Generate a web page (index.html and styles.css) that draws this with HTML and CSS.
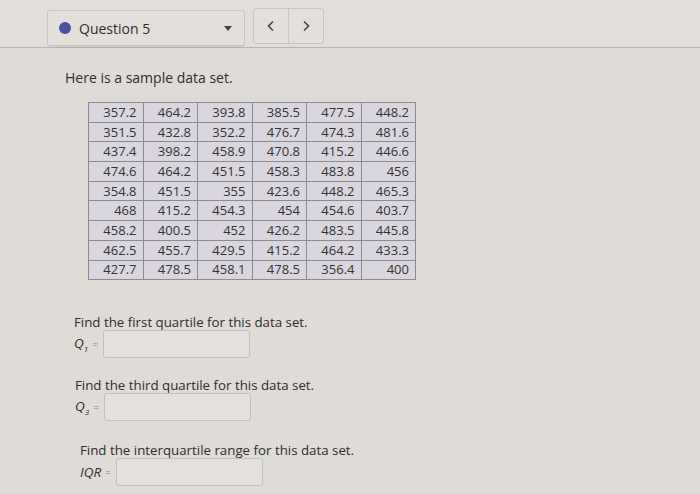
FILE: index.html
```html
<!DOCTYPE html>
<html>
<head>
<meta charset="utf-8">
<link rel="stylesheet" href="styles.css">
</head>
<body>
<div class="header">
  <div class="qselect">
    <span class="dot"></span>
    <span class="qtitle">Question 5</span>
    <span class="caret"></span>
  </div>
  <div class="nav">
    <div class="navbtn"><svg width="10" height="12" viewBox="0 0 10 12"><path d="M7 1.5 L2.5 6 L7 10.5" fill="none" stroke="#444" stroke-width="1.6"/></svg></div>
    <div class="navbtn"><svg width="10" height="12" viewBox="0 0 10 12"><path d="M3 1.5 L7.5 6 L3 10.5" fill="none" stroke="#444" stroke-width="1.6"/></svg></div>
  </div>
</div>
<div class="main">
  <p class="intro">Here is a sample data set.</p>
  <table class="data">
    <tr><td>357.2</td><td>464.2</td><td>393.8</td><td>385.5</td><td>477.5</td><td>448.2</td></tr>
    <tr><td>351.5</td><td>432.8</td><td>352.2</td><td>476.7</td><td>474.3</td><td>481.6</td></tr>
    <tr><td>437.4</td><td>398.2</td><td>458.9</td><td>470.8</td><td>415.2</td><td>446.6</td></tr>
    <tr><td>474.6</td><td>464.2</td><td>451.5</td><td>458.3</td><td>483.8</td><td>456</td></tr>
    <tr><td>354.8</td><td>451.5</td><td>355</td><td>423.6</td><td>448.2</td><td>465.3</td></tr>
    <tr><td>468</td><td>415.2</td><td>454.3</td><td>454</td><td>454.6</td><td>403.7</td></tr>
    <tr><td>458.2</td><td>400.5</td><td>452</td><td>426.2</td><td>483.5</td><td>445.8</td></tr>
    <tr><td>462.5</td><td>455.7</td><td>429.5</td><td>415.2</td><td>464.2</td><td>433.3</td></tr>
    <tr><td>427.7</td><td>478.5</td><td>458.1</td><td>478.5</td><td>356.4</td><td>400</td></tr>
  </table>

  <div class="q q1">
    <p class="prompt">Find the first quartile for this data set.</p>
    <div class="answer"><span class="lbl">Q<sub>1</sub></span><span class="eq">=</span><span class="box"></span></div>
  </div>
  <div class="q q3">
    <p class="prompt">Find the third quartile for this data set.</p>
    <div class="answer"><span class="lbl">Q<sub>3</sub></span><span class="eq">=</span><span class="box"></span></div>
  </div>
  <div class="q qiqr">
    <p class="prompt">Find the interquartile range for this data set.</p>
    <div class="answer"><span class="lbl">IQR</span><span class="eq">=</span><span class="box"></span></div>
  </div>
</div>
</body>
</html>
```
FILE: styles.css
```css
html, body {
  margin: 0;
  padding: 0;
}
body {
  width: 700px;
  height: 494px;
  overflow: hidden;
  background: #dfdbd7;
  font-family: "Open Sans", "Liberation Sans", sans-serif;
  color: #2e2e2e;
}
.header {
  height: 48px;
  border-bottom: 1px solid #b8b5b1;
  display: flex;
  align-items: flex-start;
  padding: 10px 0 0 47px;
  box-sizing: border-box;
  gap: 8px;
  background: #e2dfdb;
}
.qselect {
  width: 198px;
  height: 36px;
  box-sizing: border-box;
  border: 1px solid #c9c6c2;
  border-radius: 3px;
  background: #e3e0dc;
  display: flex;
  align-items: center;
  padding: 0 12px 0 11px;
  box-shadow: 0 1px 1px rgba(0,0,0,0.08);
}
.dot {
  width: 12px;
  height: 12px;
  border-radius: 50%;
  background: #4b4fa3;
  margin-right: 8px;
}
.qtitle {
  font-size: 14px;
  color: #2e2e2e;
  flex: 1;
}
.caret {
  width: 0;
  height: 0;
  border-left: 4px solid transparent;
  border-right: 4px solid transparent;
  border-top: 5px solid #444;
}
.nav {
  display: flex;
  height: 36px;
  border: 1px solid #c9c6c2;
  border-radius: 3px;
  box-sizing: border-box;
  margin-top: -2px;
  background: #e3e0dc;
}
.navbtn {
  width: 34px;
  display: flex;
  align-items: center;
  justify-content: center;
}
.navbtn + .navbtn {
  border-left: 1px solid #c9c6c2;
}
.main {
  padding-left: 65px;
}
.intro {
  margin: 21px 0 0;
  font-size: 14px;
  line-height: 18px;
  color: #2e2e2e;
}
.data {
  margin: 15px 0 0 23px;
  border-collapse: collapse;
  border: 1px solid #6f6c70;
  background: #d9d6df;
}
.data td {
  border: 1px solid #8d8a90;
  width: 54.5px;
  height: 19.7px;
  padding: 0 6px 0 0;
  box-sizing: border-box;
  text-align: right;
  font-size: 13px;
  line-height: 17px;
  color: #333;
}
.q1 {
  margin: 34px 0 0 9px;
}
.q3 {
  margin: 19px 0 0 10px;
}
.qiqr {
  margin: 21px 0 0 15px;
}
.prompt {
  margin: 0;
  font-size: 13.3px;
  line-height: 16px;
  color: #2e2e2e;
}
.answer {
  display: flex;
  align-items: center;
  height: 28px;
}
.lbl {
  font-style: italic;
  font-size: 13.5px;
  color: #2e2e2e;
}
.lbl sub {
  font-size: 8px;
}
.eq {
  font-size: 10px;
  color: #888;
  margin: 0 5px 0 4px;
}
.box {
  width: 147px;
  height: 28px;
  box-sizing: border-box;
  border: 1px solid #c3c0bc;
  border-radius: 3px;
  background: #e4e1dd;
}
```
